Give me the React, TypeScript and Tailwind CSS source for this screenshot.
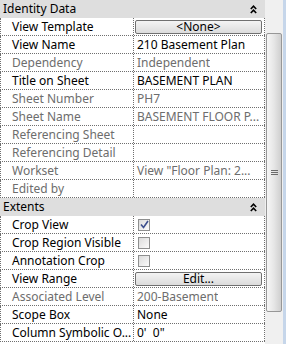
import React from "react";

type Row = {
  label: string;
  value?: string;
  ro?: boolean;
  kind?: "text" | "button" | "check";
  checked?: boolean;
};

const identity: Row[] = [
  { label: "View Template", kind: "button", value: "<None>" },
  { label: "View Name", value: "210 Basement Plan" },
  { label: "Dependency", value: "Independent", ro: true },
  { label: "Title on Sheet", value: "BASEMENT PLAN" },
  { label: "Sheet Number", value: "PH7", ro: true },
  { label: "Sheet Name", value: "BASEMENT FLOOR P...", ro: true },
  { label: "Referencing Sheet", value: "", ro: true },
  { label: "Referencing Detail", value: "", ro: true },
  { label: "Workset", value: 'View "Floor Plan: 2...', ro: true },
  { label: "Edited by", value: "", ro: true },
];

const extents: Row[] = [
  { label: "Crop View", kind: "check", checked: true },
  { label: "Crop Region Visible", kind: "check" },
  { label: "Annotation Crop", kind: "check" },
  { label: "View Range", kind: "button", value: "Edit..." },
  { label: "Associated Level", value: "200-Basement", ro: true },
  { label: "Scope Box", value: "None" },
  { label: "Column Symbolic O...", value: "0'  0\"" },
];

const Collapse = () => (
  <svg width="7" height="9" viewBox="0 0 7 9" className="mr-[8px]">
    <path d="M0.8 4 L3.5 1.2 L6.2 4 M0.8 8 L3.5 5.2 L6.2 8" stroke="#000" strokeWidth="1.6" fill="none" />
  </svg>
);

const Group = ({ title }: { title: string }) => (
  <div className="flex h-[18px] items-center justify-between bg-[#dedede] pl-[3px] text-black">
    <span>{title}</span>
    <Collapse />
  </div>
);

const Check = ({ checked }: { checked?: boolean }) => (
  <div className="flex h-[12px] w-[12px] items-center justify-center border border-[#8e8f8f] bg-gradient-to-br from-[#dcdcdc] to-[#fbfbfb]">
    {checked && (
      <svg width="9" height="9" viewBox="0 0 9 9">
        <path d="M1 4.5 L3.5 7.5 L8 1" stroke="#3c4f8e" strokeWidth="1.6" fill="none" />
      </svg>
    )}
  </div>
);

const PropRow = ({ row }: { row: Row }) => (
  <div className="flex h-[18px] border-b border-l border-dotted border-[#6f6f6f]">
    <div
      className={`flex w-[133px] shrink-0 items-center whitespace-nowrap border-r border-dotted border-[#6f6f6f] pl-[11px] ${
        row.ro ? "text-[#6d6d6d]" : "text-black"
      }`}
    >
      {row.label}
    </div>
    <div
      className={`flex min-w-0 flex-1 items-center border-r border-dotted border-[#6f6f6f] ${
        row.ro ? "text-[#6d6d6d]" : "text-black"
      }`}
    >
      {row.kind === "button" ? (
        <div className="ml-[1px] mr-[2px] flex h-[14px] flex-1 items-center justify-center rounded-[2px] border border-[#707070] bg-gradient-to-b from-[#f4f4f4] to-[#dcdcdc] leading-none">
          {row.value}
        </div>
      ) : row.kind === "check" ? (
        <div className="pl-[4px]">
          <Check checked={row.checked} />
        </div>
      ) : (
        <span className="truncate whitespace-pre pl-[3px]">{row.value}</span>
      )}
    </div>
  </div>
);

export default function App() {
  return (
    <div className="flex h-[344px] w-[286px] overflow-hidden bg-white text-[12px] font-['Noto_Sans',sans-serif]">
      <div className="w-[265px] shrink-0">
        <Group title="Identity Data" />
        {identity.map((r) => (
          <PropRow key={r.label} row={r} />
        ))}
        <Group title="Extents" />
        {extents.map((r) => (
          <PropRow key={r.label} row={r} />
        ))}
      </div>
      <div className="flex flex-1">
        <div className="flex flex-1 flex-col bg-[#f0f0f0] pl-[1px] pr-[1px] pt-[33px]">
          <div className="flex h-[279px] items-center justify-center rounded-[2px] border border-[#979797] bg-gradient-to-r from-[#f6f6f6] via-[#e6e6e6] to-[#cfcfcf]">
            <div className="flex flex-col gap-[1px]">
              <div className="h-px w-[7px] bg-[#6b6b6b]" />
              <div className="h-px w-[7px] bg-[#6b6b6b]" />
              <div className="h-px w-[7px] bg-[#6b6b6b]" />
            </div>
          </div>
        </div>
        <div className="w-[3px] bg-[#c6d6ea]" />
      </div>
    </div>
  );
}
